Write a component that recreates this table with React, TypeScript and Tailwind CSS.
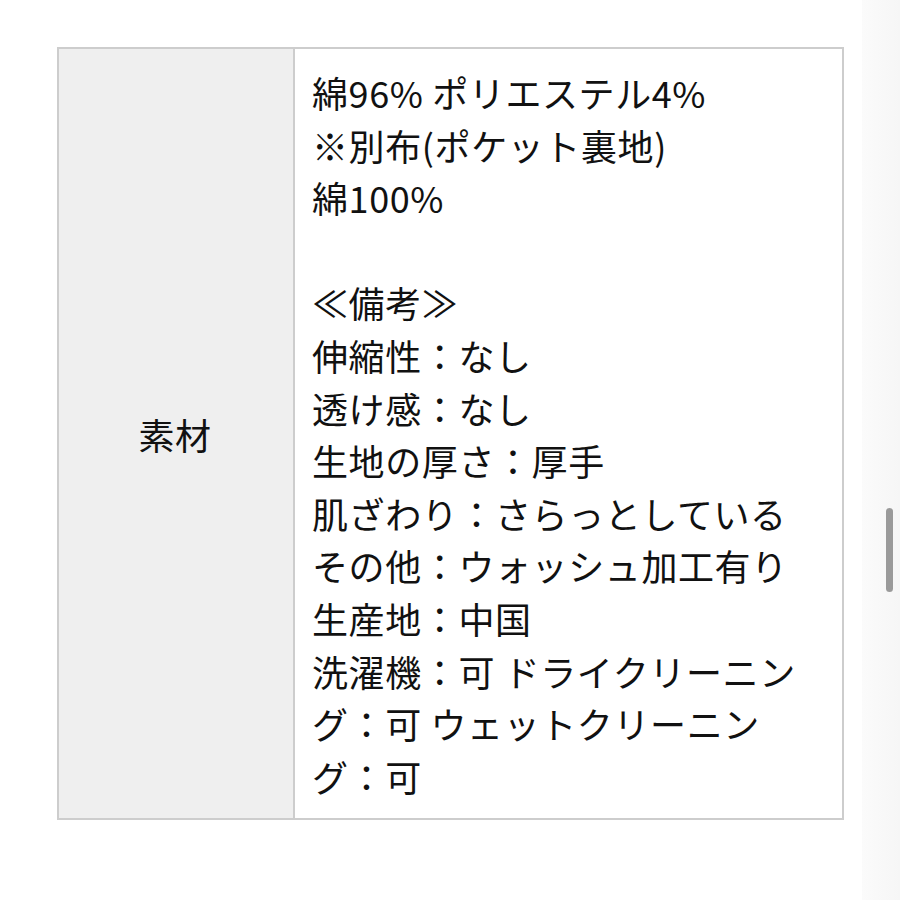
import React from 'react';

const lines = [
  '綿96% ポリエステル4%',
  '※別布(ポケット裏地)',
  '綿100%',
  '',
  '≪備考≫',
  '伸縮性：なし',
  '透け感：なし',
  '生地の厚さ：厚手',
  '肌ざわり：さらっとしている',
  'その他：ウォッシュ加工有り',
  '生産地：中国',
  '洗濯機：可 ドライクリーニン',
  'グ：可 ウェットクリーニン',
  'グ：可',
];

export default function App() {
  return (
    <div
      className="relative h-[900px] w-[900px] overflow-hidden bg-white text-[#111]"
      style={{ fontFamily: '"Noto Sans CJK JP", "Noto Sans", sans-serif' }}
    >
      <div className="pl-[57px] pt-[47px]">
        <div className="flex w-[787px] border-2 border-[#cdcdcd]">
          <div className="flex w-[236px] shrink-0 items-center justify-center border-r-2 border-[#cdcdcd] bg-[#efefef] pr-[2px] text-[36px] tracking-[0.5px]">
            素材
          </div>
          <div className="flex-1 px-[17px] pt-[17px] pb-[16px] text-[36px] leading-[52.6px] tracking-[0.6px]">
            {lines.map((l, i) => (
              <div key={i} className="h-[52.6px] whitespace-nowrap">
                {l}
              </div>
            ))}
          </div>
        </div>
      </div>

      {/* scrollbar */}
      <div className="absolute right-0 top-0 h-full w-[38px] bg-gradient-to-r from-[#fbfbfb] to-[#f6f6f6]">
        <div className="absolute left-[24px] top-[508px] h-[84px] w-[7px] rounded-full bg-[#9a9a9a]" />
      </div>
    </div>
  );
}
